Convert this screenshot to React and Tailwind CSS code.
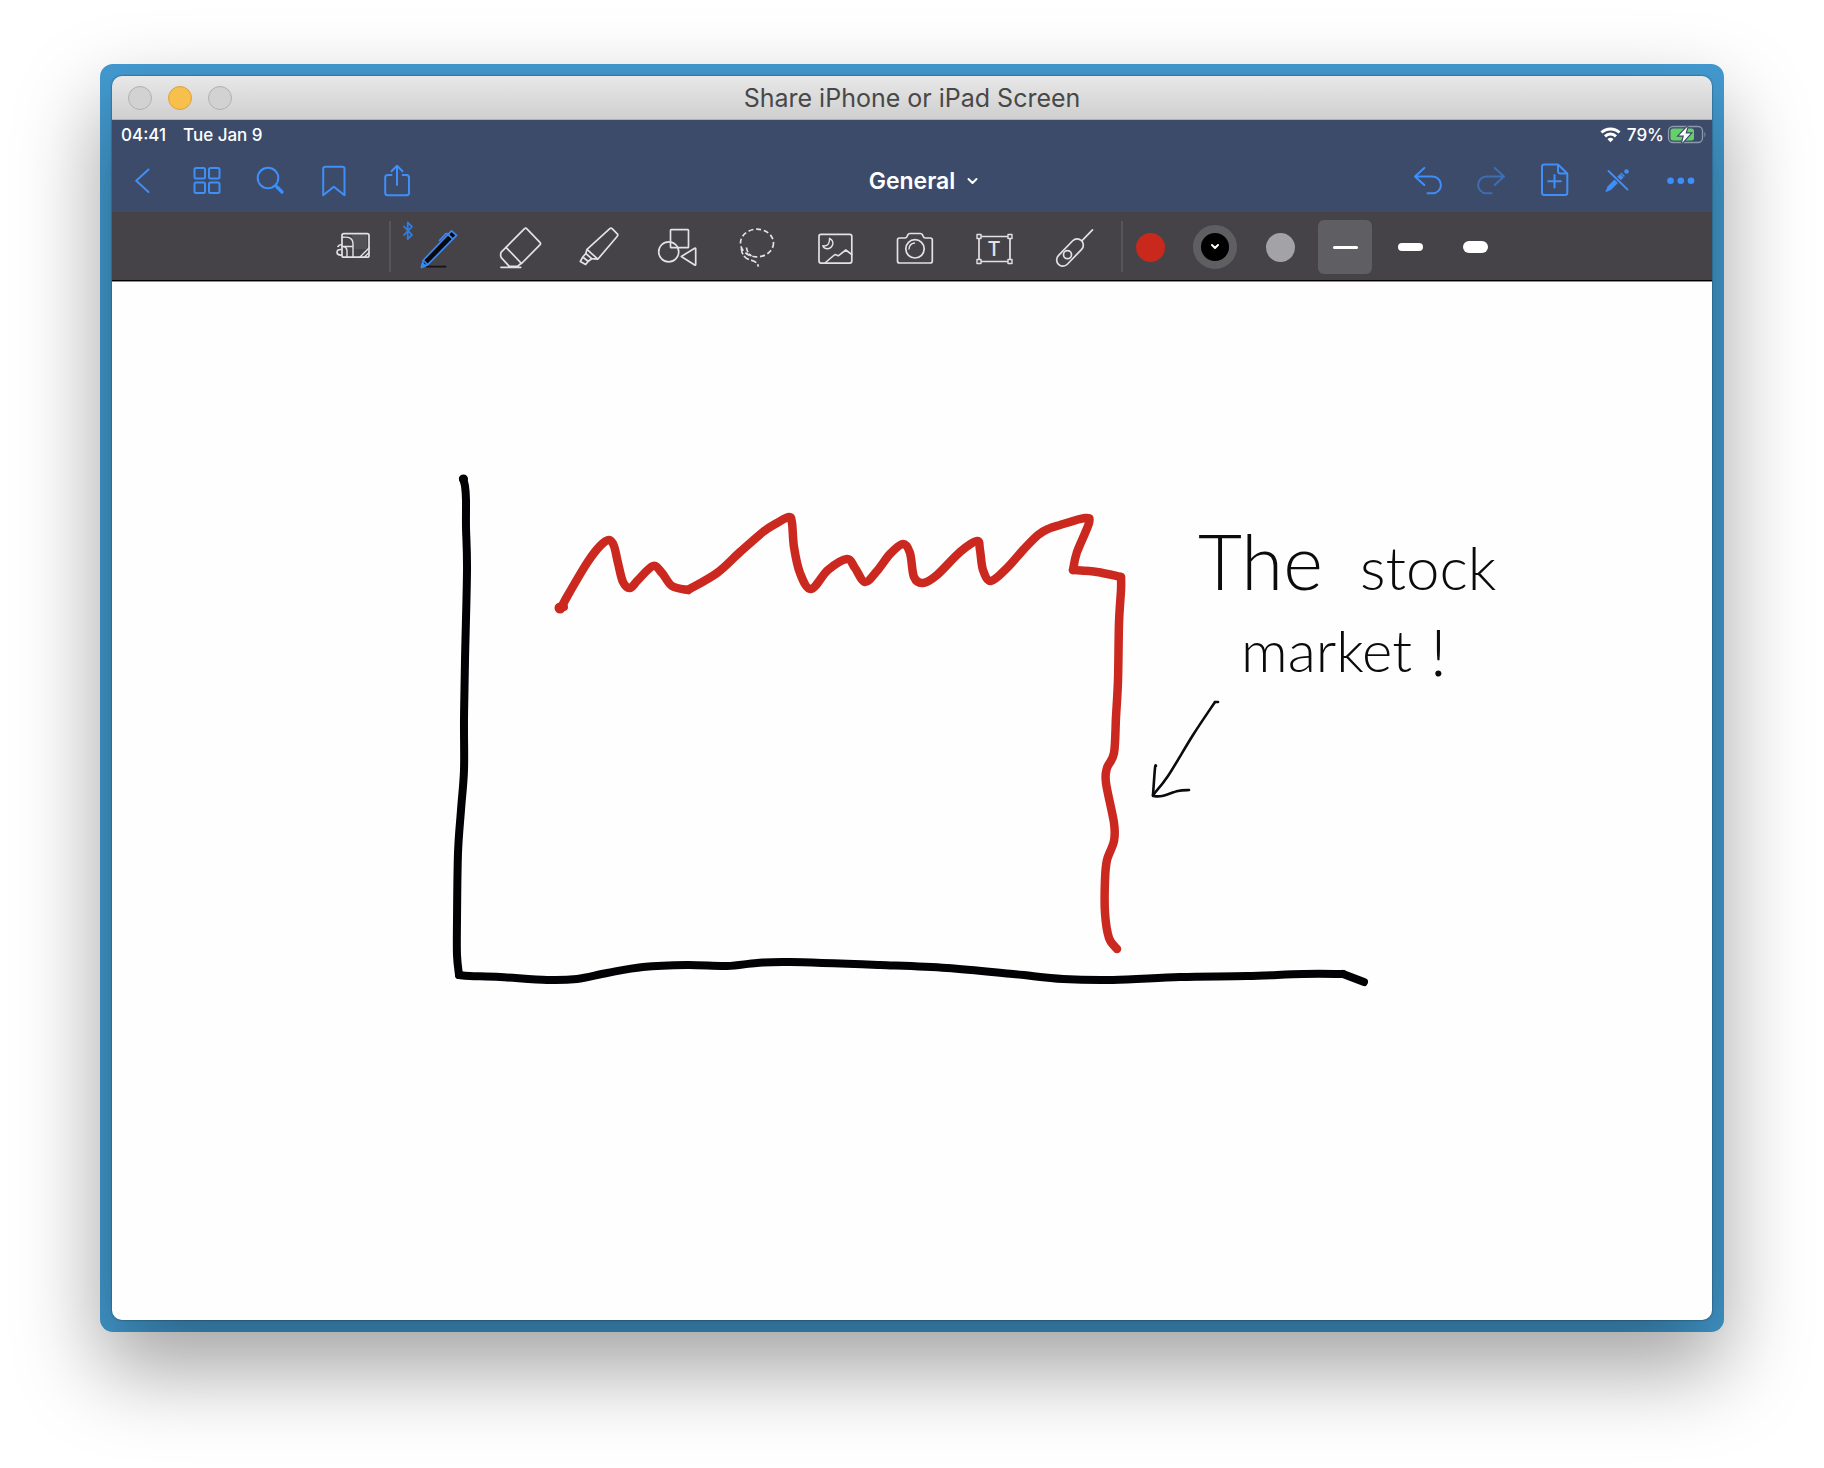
import React from "react";

const INK = "#e2e1e6";

/* Smooth curve through a list of [x, y] points. */
function smooth(points) {
  const n = points.length;
  let d = `M${points[0][0]} ${points[0][1]}`;
  for (let i = 0; i < n - 1; i++) {
    const p0 = points[Math.max(i - 1, 0)];
    const p1 = points[i];
    const p2 = points[i + 1];
    const p3 = points[Math.min(i + 2, n - 1)];
    d += `C${p1[0] + (p2[0] - p0[0]) / 6} ${p1[1] + (p2[1] - p0[1]) / 6} ${p2[0] - (p3[0] - p1[0]) / 6} ${p2[1] - (p3[1] - p1[1]) / 6} ${p2[0]} ${p2[1]}`;
  }
  return d;
}

const AXES = [
  [[463, 479], [465, 486], [466, 500], [466, 527], [467, 570], [465, 660], [464, 720], [464, 770], [461, 810], [458, 853], [457, 920], [457, 955], [459, 975]],
  [[459, 975], [470, 976], [500, 977], [547, 980], [577, 979], [607, 973], [643, 967], [687, 965], [727, 966], [757, 963], [790, 962], [880, 965], [947, 968], [1013, 974], [1063, 979], [1113, 980], [1180, 977], [1247, 976], [1303, 974], [1343, 974]],
  [[1343, 974], [1364, 982]],
];

const PRICE = [
  [[561, 608], [568, 595], [587, 563], [600, 546], [609, 540], [614, 546], [618, 563], [623, 582], [630, 588], [638, 580], [653, 566], [662, 573], [672, 586], [688, 590]],
  [[688, 590], [717, 573], [740, 552], [763, 532], [777, 523], [789, 517], [792, 523], [794, 547], [800, 573], [811, 589], [828, 570], [847, 559], [855, 568], [865, 582], [877, 571], [890, 554], [903, 544], [910, 553], [914, 577], [923, 583], [937, 575], [960, 552], [977, 541], [980, 550], [983, 570], [991, 581], [1007, 568], [1024, 549], [1038, 535], [1048, 529], [1060, 525], [1085, 518], [1089, 523], [1077, 552], [1073, 570]],
  [[1073, 570], [1097, 572], [1121, 577]],
  [[1121, 577], [1121, 590], [1119, 623], [1118, 680], [1116, 717], [1114, 753], [1107, 768], [1106, 783], [1114, 823], [1114, 841], [1107, 860], [1105, 880], [1105, 913], [1109, 938], [1117, 949]],
];

const ARROW = [
  [[1218, 702], [1215, 702]],
  [[1215, 702], [1193, 735], [1168, 776], [1153, 795]],
  [[1156, 766], [1155, 768], [1153, 795]],
  [[1153, 796], [1162, 796], [1178, 791], [1189, 790]],
];

function Stroke({ lines, color, width }) {
  return (
    <g fill="none" stroke={color} strokeWidth={width} strokeLinecap="round" strokeLinejoin="round">
      {lines.map((line, i) => (
        <path key={i} d={smooth(line)} />
      ))}
    </g>
  );
}

/* Navigation bar button */
function NavButton({ label, box, dim, children }) {
  return (
    <button type="button" aria-label={label} disabled={dim} className="h-[63px] w-[63px] shrink-0">
      <svg
        viewBox={box}
        className={dim ? "h-full w-full opacity-50" : "h-full w-full"}
        fill="none"
        stroke="#3f8ff8"
        strokeWidth="2"
        strokeLinecap="round"
        strokeLinejoin="round"
        aria-hidden="true"
      >
        {children}
      </svg>
    </button>
  );
}

/* Drawing tool button */
function Tool({ label, box, wide = true, pressed, children }) {
  return (
    <button type="button" aria-label={label} aria-pressed={pressed} className={wide ? "h-[68px] w-[79px] shrink-0" : "h-[68px] w-[67px] shrink-0"}>
      <svg viewBox={box} className="h-full w-full" fill="none" stroke={INK} strokeWidth="1.7" strokeLinecap="round" strokeLinejoin="round" aria-hidden="true">
        {children}
      </svg>
    </button>
  );
}

function TitleBar() {
  return (
    <header className="grid h-11 grid-cols-[1fr_auto_1fr] items-center border-b border-[#b1b1b1] bg-linear-to-b from-[#e8e8e8] to-[#cfcfcf] px-4">
      <div className="flex gap-4">
        <button type="button" aria-label="Close" className="h-6 w-6 rounded-full border border-[#b0b0b0] bg-[#d2d2d2]" />
        <button type="button" aria-label="Minimize" className="h-6 w-6 rounded-full border border-[#dea03a] bg-[#f7c04d]" />
        <button type="button" aria-label="Zoom" className="h-6 w-6 rounded-full border border-[#b0b0b0] bg-[#d2d2d2]" />
      </div>
      <h1 className="text-[25px] leading-8 whitespace-nowrap text-[#484848]">Share iPhone or iPad Screen</h1>
    </header>
  );
}

function StatusBar() {
  return (
    <div className="flex h-[29px] items-center justify-between pr-[6px] pl-[9px] text-[17px] leading-6 font-medium text-white">
      <div className="flex gap-[17px]">
        <time>04:41</time>
        <span>Tue Jan 9</span>
      </div>
      <div className="flex items-center">
        <svg viewBox="1601 126 21 17" className="mr-[6px] h-[17px] w-[21px]" fill="none" stroke="#fff" strokeWidth="3" aria-label="Wi-Fi">
          <path d="M1602.500 132.500a13 13 0 0 1 18 0" />
          <path d="M1606 136.300a8 8 0 0 1 11 0" />
          <path d="M1611.500 142.200l-3-3a4.500 4.500 0 0 1 6 0z" fill="#fff" stroke="none" />
        </svg>
        <span className="mr-[3px]">79%</span>
        <svg viewBox="1666 125 39 19" className="h-[19px] w-[39px]" fill="none" aria-label="Battery charging">
          <rect x="1667.500" y="126.500" width="34" height="16" rx="4.500" stroke="#8f98ad" strokeWidth="1.300" />
          <path d="M1703.500 131.500q1.800 3 0 6z" fill="#8f98ad" />
          <rect x="1669.500" y="128.500" width="23.500" height="12" rx="2.500" fill="#65d06a" />
          <path d="M1686.500 126.500l-8.500 9h5l-2 7.500 8.500-9.500h-5z" fill="#fff" stroke="#3d4b6a" strokeWidth="2.400" paintOrder="stroke" />
        </svg>
      </div>
    </div>
  );
}

function NavBar() {
  return (
    <nav className="grid h-[63px] grid-cols-[1fr_auto_1fr] items-center">
      <div className="flex">
        <NavButton label="Back" box="112 149 63 63">
          <path d="M148.500 169.500l-12.300 11.300 12.300 11.200" />
        </NavButton>
        <NavButton label="Pages" box="175 149 63 63">
          <rect x="194.500" y="168" width="10.500" height="10.500" rx="1.500" />
          <rect x="209" y="168" width="10.500" height="10.500" rx="1.500" />
          <rect x="194.500" y="182.500" width="10.500" height="10.500" rx="1.500" />
          <rect x="209" y="182.500" width="10.500" height="10.500" rx="1.500" />
        </NavButton>
        <NavButton label="Search" box="238 149 63 63">
          <circle cx="268" cy="178" r="10.300" />
          <path d="M275.500 185.500l2 2" />
          <path d="M277 187l5 5" strokeWidth="3.200" />
        </NavButton>
        <NavButton label="Bookmark" box="301 149 63 63">
          <path d="M323.200 195.300V169q0-2.300 2.300-2.300h16.700q2.300 0 2.300 2.300v26.300l-10.700-8.500z" />
        </NavButton>
        <NavButton label="Share" box="364 149 63 63">
          <path d="M391.500 175h-3.800q-2.500 0-2.500 2.500v15.300q0 2.500 2.500 2.500h18.800q2.500 0 2.500-2.500v-15.300q0-2.500-2.500-2.500h-3.800M397 185v-19M391.500 171.300l5.500-5.600 5.500 5.600" />
        </NavButton>
      </div>
      <button type="button" className="flex items-center gap-3 pl-[23px] text-[23px] leading-8 font-semibold text-white">
        General
        <svg viewBox="0 0 11 8" className="h-2 w-[11px]" fill="none" stroke="#fff" strokeWidth="2" strokeLinecap="round" strokeLinejoin="round" aria-hidden="true">
          <path d="M1.500 2l4 4 4-4" />
        </svg>
      </button>
      <div className="flex justify-end">
        <NavButton label="Undo" box="1397 149 63 63">
          <path d="M1424.300 168l-9.300 8.500 9.300 8.500M1415.500 176.500h17a8.400 8.400 0 0 1 0 16.800h-5" />
        </NavButton>
        <NavButton label="Redo" box="1460 149 63 63" dim>
          <path d="M1494.700 168l9.300 8.500-9.300 8.500M1503.500 176.500h-17a8.400 8.400 0 0 0 0 16.800h5" />
        </NavButton>
        <NavButton label="Add page" box="1523 149 63 63">
          <path d="M1558 164.500h-13.700q-2.300 0-2.300 2.300v26q0 2.300 2.300 2.300h20.700q2.300 0 2.300-2.300v-19.300zv6.500q0 2.500 2.500 2.500h6.500M1554.500 175v12.500M1548.200 181.300h12.600" />
        </NavButton>
        <NavButton label="Read-only mode" box="1586 149 63 63">
          <path d="M1605.300 192.300l2.200-5.800 14-14 3.400 3.400-14 14z" fill="#3f8ff8" stroke="none" />
          <path d="M1620.500 174l3 3" stroke="#3d4b6a" strokeWidth="1" />
          <path d="M1608.500 171l19 18.500" stroke="#3d4b6a" strokeWidth="4" strokeLinecap="butt" />
          <path d="M1608.500 171l19 18.500" strokeWidth="1.900" />
          <circle cx="1626.500" cy="171.500" r="2.300" fill="#3f8ff8" stroke="none" />
        </NavButton>
        <NavButton label="More" box="1649 149 63 63">
          <g fill="#3f8ff8" stroke="none">
            <circle cx="1670.500" cy="180.700" r="3.300" />
            <circle cx="1680.800" cy="180.700" r="3.300" />
            <circle cx="1691" cy="180.700" r="3.300" />
          </g>
        </NavButton>
      </div>
    </nav>
  );
}

function Tools() {
  return (
    <>
      <Tool label="Zoom window" box="322 212 67 68" wide={false}>
        <rect x="352" y="235" width="15" height="14" fill="#525157" stroke="none" />
        <rect x="342" y="233.700" width="27" height="23.500" rx="1.800" />
        <path d="M342.500 237.300q10-1.300 10.500 6.200v13.500M342.500 246.500h10.500M342.500 246.500q4 0 4.500 4v6.500M360 257l9-9M364.500 257l4.500-4.500" strokeWidth="1.400" />
        <path d="M338 246.500q1-1.800 3.500-1.800M341.500 249.500q-4.500-.5-4.500 3 .5 3 4.500 2.500" strokeWidth="1.600" />
      </Tool>
      <div className="mr-[10px] h-[51px] w-[2px] shrink-0 bg-[#56555a]" />
      <Tool label="Pen" box="401 212 79 68" pressed>
        <path d="M404 226.500l8 8.300-4.300 4.200v-16.500l4.300 4.200-8 8.300" stroke="#2f7de0" strokeWidth="1.800" />
        <path d="M427 266.700h18.500" stroke="#141318" />
        <g stroke="#3a8af0">
          <path d="M421.500 267.300l2-7.300 28-29.200 5 4.600-28.500 29z" fill="#08080d" />
          <path d="M448 234.500l5 4.600M423.500 260.500l4 4M439.500 240.500l6.500-7 3 .3" />
          <path d="M421.500 267.300l1.300-4 2.700 2.700z" fill="#3a8af0" />
        </g>
      </Tool>
      <Tool label="Eraser" box="480 212 79 68">
        <path d="M506 247.300l18.300-18.500q1.300-1.200 2.600 0l13 13.500q1.300 1.300 0 2.600l-18.400 18.600z" />
        <path d="M506 247.300l-4.800 4.900q-1.400 3.300.5 6l7.600 8.100h8.200l4-3.300M501 267.300h19.700" />
      </Tool>
      <Tool label="Highlighter" box="559 212 79 68">
        <path d="M587 249.300l22.800-20.600q1.200-1 2.300 0l5.200 5.200q1 1.200 0 2.300l-19.500 23zM587 249.300l-1.200 4.200 5.900 5.200 6.100.5" />
        <path d="M585.800 253.500l-3 3.500-2.500 4.500 5.300 3 2.700-3.200 3.400-2.600M582.800 257l5.500 4.500" />
      </Tool>
      <Tool label="Shapes" box="638 212 79 68">
        <rect x="670.500" y="229.700" width="18" height="18" rx=".8" />
        <circle cx="668.700" cy="251.800" r="10" />
        <path d="M681.300 256.500l13.400-8.300q1-.4 1 .8v15.300q0 1.200-1 .7z" />
      </Tool>
      <Tool label="Lasso" box="717 212 79 68">
        <ellipse cx="757" cy="243" rx="16.500" ry="13.800" strokeDasharray="5 2.800" strokeLinecap="butt" />
        <path d="M741.300 248.500q.7 8.500 8 11.200 8.500 1.600 9 7" strokeDasharray="6 2" strokeLinecap="butt" />
        <path d="M746.500 247.500q.5 5.500 5 8.500" strokeDasharray="5 2" strokeLinecap="butt" />
      </Tool>
      <Tool label="Image" box="796 212 79 68">
        <rect x="819" y="234.300" width="32.800" height="28.800" rx="2" />
        <path d="M829.500 238.300q4 2 3.300 6-1.500 4.600-6 4.500-3-.3-4-3 4 .7 5.700-2 1.300-2.600 1-5.500z" strokeWidth="1.400" />
        <path d="M825.500 262.500l9.500-8 3.300 1.300 7.500-5.800 6 4.500" strokeWidth="1.600" />
      </Tool>
      <Tool label="Camera" box="875 212 79 68">
        <path d="M899.500 238h5.500q1.500 0 2-1.500l.8-1.700q.6-1.300 2-1.300h10.700q1.400 0 2 1.300l.8 1.700q.5 1.500 2 1.500h5q2 0 2 2v21q0 2-2 2h-30.800q-2 0-2-2v-21q0-2 2-2z" />
        <circle cx="915" cy="248.800" r="9.200" />
        <path d="M909 249q.3-5.300 5.500-6" strokeWidth="1.400" />
      </Tool>
      <Tool label="Text" box="954 212 79 68">
        <rect x="979" y="236.500" width="31" height="25" />
        <g fill="#454348" strokeWidth="1.400">
          <rect x="977" y="234.500" width="4" height="4" />
          <rect x="1008" y="234.500" width="4" height="4" />
          <rect x="977" y="259.500" width="4" height="4" />
          <rect x="1008" y="259.500" width="4" height="4" />
        </g>
        <text x="994" y="256" textAnchor="middle" fontSize="20" fontWeight="500" fill={INK} stroke="none">T</text>
      </Tool>
      <Tool label="Laser pointer" box="1033 212 79 68">
        <rect x="1053.500" y="246.300" width="33" height="12.400" rx="6.200" transform="rotate(-46 1070 252.500)" />
        <circle cx="1067.500" cy="254.700" r="4" />
        <path d="M1082.500 240.200l10-10.400" />
      </Tool>
    </>
  );
}

function Swatch({ label, className, children }) {
  return (
    <button type="button" aria-label={label} className="flex h-[54px] w-[54px] shrink-0 items-center justify-center">
      <span className={className}>{children}</span>
    </button>
  );
}

function Toolbar() {
  return (
    <div role="toolbar" aria-label="Drawing tools" className="flex h-[69px] items-center justify-center border-b border-black bg-[#454348]">
      <Tools />
      <div className="ml-[9px] h-[51px] w-[2px] shrink-0 bg-[#56555a]" />
      <div className="flex gap-[11px] pt-[2px]">
        <Swatch label="Red" className="h-[29px] w-[29px] rounded-full bg-[#c9281d]" />
        <Swatch label="Black" className="flex h-11 w-11 items-center justify-center rounded-full border-[8px] border-[#5f5e63] bg-black">
          <svg viewBox="0 0 10 8" className="h-2 w-[10px]" fill="none" stroke="#fff" strokeWidth="2" strokeLinecap="round" strokeLinejoin="round" aria-hidden="true">
            <path d="M2 2l3 3 3-3" />
          </svg>
        </Swatch>
        <Swatch label="Gray" className="h-[29px] w-[29px] rounded-full bg-[#a3a2a7]" />
        <button type="button" aria-label="Thin stroke" aria-pressed="true" className="flex h-[54px] w-[54px] items-center justify-center rounded-md bg-[#5f5e63]">
          <span className="h-[3px] w-[25px] rounded-full bg-white" />
        </button>
        <Swatch label="Medium stroke" className="h-2 w-[25px] rounded-full bg-white" />
        <Swatch label="Thick stroke" className="h-3 w-[25px] rounded-full bg-white" />
      </div>
    </div>
  );
}

function Canvas() {
  return (
    <main className="border-t border-[#8d8c90] bg-[#fefefe]">
      <svg viewBox="112 282 1600 1038" className="block h-auto w-full" role="img" aria-label="Sketch of a chart that drops sharply">
        <Stroke lines={AXES} color="#020104" width="8" />
        <Stroke lines={PRICE} color="#cb291f" width="8.5" />
        <circle cx="560" cy="608" r="5.500" fill="#cb291f" />
        <circle cx="564" cy="607" r="4" fill="#cb291f" />
        <circle cx="463.500" cy="479" r="4.500" fill="#020104" />
        <g fill="#0b0b0d" fontFamily="Lato, sans-serif" fontWeight="300">
          <text x="1198" y="590" fontSize="76">The</text>
          <text x="1360" y="590" fontSize="60">stock</text>
          <text x="1241" y="672" fontSize="58">market</text>
          <text x="1430" y="676" fontSize="66">!</text>
        </g>
        <Stroke lines={ARROW} color="#0b0b0d" width="2.6" />
      </svg>
    </main>
  );
}

export default function App() {
  return (
    <div className="overflow-hidden bg-white px-[100px] pt-16 pb-[136px] font-['Inter',sans-serif]">
      <div className="rounded-[13px] bg-[#439bd1] p-3 shadow-[0_38px_84px_rgba(0,0,0,0.36)]">
        <div className="relative">
          {/* Window shadow, cut off at the edge of the blue frame */}
          <div className="pointer-events-none absolute -inset-3 overflow-hidden rounded-[13px] p-3" aria-hidden="true">
            <div className="h-full rounded-[10px] shadow-[0_38px_84px_rgba(0,0,0,0.36),0_0_2px_rgba(0,0,0,0.6)]" />
          </div>
          <div className="relative overflow-hidden rounded-[10px]">
            <TitleBar />
            <div className="bg-[#3d4b6a]">
              <StatusBar />
              <NavBar />
            </div>
            <Toolbar />
            <Canvas />
          </div>
        </div>
      </div>
    </div>
  );
}
